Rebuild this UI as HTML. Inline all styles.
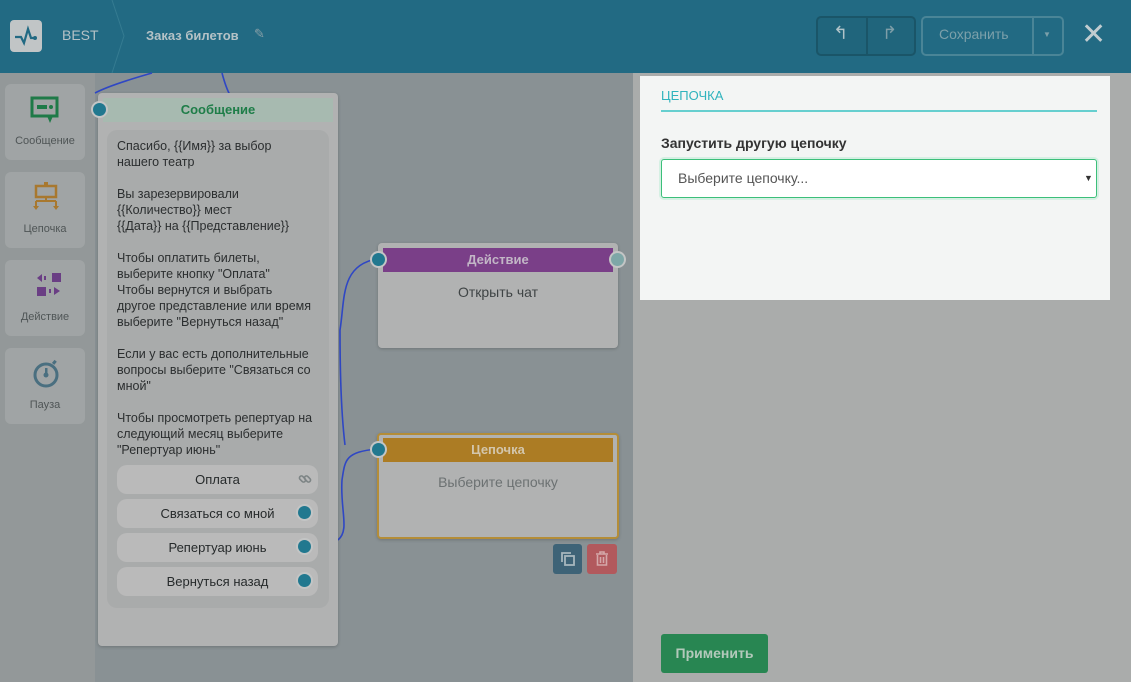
<!DOCTYPE html>
<html><head><meta charset="utf-8"><style>
*{box-sizing:border-box;margin:0;padding:0}
body{width:1131px;height:682px;overflow:hidden;position:relative;background:#899194;font-family:"Liberation Sans","DejaVu Sans",sans-serif;}
.abs{position:absolute}
#hdr{left:0;top:0;width:1131px;height:73px;background:#226a83}
.side{left:0;top:73px;width:95px;height:609px;background:#939899}
.tool{left:5px;width:80px;height:76px;background:#a0a4a5;border-radius:6px;text-align:center;font-size:11px;color:#4f5556}
.tool span{position:absolute;left:0;right:0;bottom:13px}
.card{background:#b1b2b2;border-radius:4px;box-shadow:0 1px 3px rgba(0,0,0,.2)}
.msgtxt{font-size:12.5px;line-height:16px;color:#2b2e2f}
.btn{left:117px;width:201px;height:29px;background:#bababa;border-radius:10px;font-size:13px;color:#262a2b;text-align:center;line-height:29px}
.dot{width:13px;height:13px;border-radius:50%;background:#21788f;box-shadow:0 0 0 2px #c3c5c5}
</style></head><body>
<div id="hdr" class="abs">
  <div class="abs" style="left:10px;top:20px;width:32px;height:32px;background:#c1c5c6;border-radius:4px"></div>
  <svg class="abs" style="left:10px;top:20px" width="32" height="32"><polyline points="5,17 11,17 14,23 18,9 21,18 25,18" fill="none" stroke="#226a83" stroke-width="2.2"/><circle cx="25" cy="18" r="2" fill="#226a83"/></svg>
  <div class="abs" style="left:62px;top:27px;color:#b5c2c6;font-size:14px">BEST</div>
  <svg class="abs" style="left:110px;top:0" width="16" height="73"><polyline points="2,0 14,36 2,73" fill="none" stroke="#357b91" stroke-width="1"/></svg>
  <div class="abs" style="left:146px;top:28px;color:#b5c2c6;font-size:13px;font-weight:bold">Заказ билетов</div>
  <div class="abs" style="left:254px;top:26px;color:#8aa1a8;font-size:13px">✎</div>
  <div class="abs" style="left:816px;top:16px;width:100px;height:40px;border:2px solid #1a5568;border-radius:5px;background:#20657c"></div>
  <div class="abs" style="left:866px;top:16px;width:2px;height:40px;background:#1a5568"></div>
  <div class="abs" style="left:833px;top:23px;color:#b0c3c8;font-size:18px">↰</div>
  <div class="abs" style="left:882px;top:23px;color:#7e9ea8;font-size:18px">↱</div>
  <div class="abs" style="left:921px;top:16px;width:143px;height:40px;border:2px solid #4a8597;border-radius:5px"></div>
  <div class="abs" style="left:1032px;top:16px;width:2px;height:40px;background:#4a8597"></div>
  <div class="abs" style="left:939px;top:26px;color:#7ca0aa;font-size:14px">Сохранить</div>
  <div class="abs" style="left:1043px;top:30px;color:#7ca0aa;font-size:8px">▼</div>
  <div class="abs" style="left:1081px;top:18px;color:#c0ccd0;font-size:30px;line-height:34px">✕</div>
</div>

<div class="abs side"></div>
<div class="abs tool" style="top:84px"><svg class="abs" style="left:25px;top:12px" width="30" height="30"><rect x="2" y="2" width="25" height="18" fill="none" stroke="#1f7a48" stroke-width="3"/><rect x="7" y="9" width="10" height="4" fill="#1f7a48"/><circle cx="21" cy="11" r="2" fill="#1f7a48"/><path d="M17 20 L20 27 L23 20" fill="#1f7a48"/></svg><span>Сообщение</span></div>
<div class="abs tool" style="top:172px"><svg class="abs" style="left:28px;top:10px" width="26" height="32"><rect x="11" y="0" width="4" height="4" fill="#a8782f"/><rect x="3" y="4" width="20" height="11" fill="none" stroke="#a8782f" stroke-width="2.5"/><path d="M13 15 V19 M3 19 H23 M3 19 V25 M23 19 V25" stroke="#a8782f" stroke-width="2" fill="none"/><path d="M0 24 L6 24 L3 28Z M20 24 L26 24 L23 28Z" fill="#a8782f"/></svg><span>Цепочка</span></div>
<div class="abs tool" style="top:260px"><svg class="abs" style="left:30px;top:12px" width="28" height="28"><path d="M2 6 L7 2 L7 10Z" fill="#6a3e84"/><rect x="9" y="4" width="2" height="4" fill="#6a3e84"/><rect x="17" y="1" width="9" height="9" fill="#6a3e84"/><rect x="2" y="15" width="9" height="9" fill="#6a3e84"/><rect x="14" y="17" width="2" height="4" fill="#6a3e84"/><path d="M19 15 L25 19 L19 23Z" fill="#6a3e84"/></svg><span>Действие</span></div>
<div class="abs tool" style="top:348px"><svg class="abs" style="left:26px;top:10px" width="30" height="32"><circle cx="15" cy="17" r="11" fill="none" stroke="#4a6f80" stroke-width="3"/><rect x="14" y="10" width="2.5" height="8" fill="#4a6f80"/><circle cx="15" cy="17" r="2.5" fill="#4a6f80"/><rect x="22" y="2" width="3" height="4" fill="#4a6f80" transform="rotate(40 23 4)"/></svg><span>Пауза</span></div>

<svg class="abs" style="left:0;top:0" width="640" height="682"><g fill="none" stroke="#2f47c4" stroke-width="1.6"><path d="M95 93 Q110 85 152 73"/><path d="M222 73 Q226 88 230 95"/><path d="M377 259 C340 265 345 300 340 330 C340 380 342 420 345 445"/><path d="M377 449 C345 452 345 460 342 480 C340 510 350 530 338 540"/></g></svg>

<div class="abs card" style="left:98px;top:93px;width:240px;height:553px"></div>
<div class="abs" style="left:103px;top:98px;width:230px;height:24px;background:#a7bab0;color:#1e7d48;font-weight:bold;font-size:13px;text-align:center;line-height:24px">Сообщение</div>
<div class="abs dot" style="left:93px;top:103px"></div>
<div class="abs" style="left:107px;top:130px;width:222px;height:478px;background:#a9abab;border-radius:10px"></div>
<div class="abs msgtxt" style="left:117px;top:138px;width:210px">Спасибо, {{Имя}} за выбор<br>нашего театр<br><br>Вы зарезервировали<br>{{Количество}} мест<br>{{Дата}} на {{Представление}}<br><br>Чтобы оплатить билеты,<br>выберите кнопку "Оплата"<br>Чтобы вернутся и выбрать<br>другое представление или время<br>выберите "Вернуться назад"<br><br>Если у вас есть дополнительные<br>вопросы выберите "Связаться со<br>мной"<br><br>Чтобы просмотреть репертуар на<br>следующий месяц выберите<br>"Репертуар июнь"</div>
<div class="abs btn" style="top:465px">Оплата<svg style="position:absolute;right:6px;top:7px" width="14" height="14"><g fill="none" stroke="#7d8485" stroke-width="1.6"><rect x="1" y="5" width="7" height="4" rx="2" transform="rotate(45 4.5 7)"/><rect x="6" y="5" width="7" height="4" rx="2" transform="rotate(45 9.5 7)"/></g></svg></div>
<div class="abs btn" style="top:499px">Связаться со мной</div>
<div class="abs btn" style="top:533px">Репертуар июнь</div>
<div class="abs btn" style="top:567px">Вернуться назад</div>
<div class="abs dot" style="left:298px;top:506px"></div>
<div class="abs dot" style="left:298px;top:540px"></div>
<div class="abs dot" style="left:298px;top:574px"></div>

<div class="abs card" style="left:378px;top:243px;width:240px;height:105px"></div>
<div class="abs" style="left:383px;top:248px;width:230px;height:24px;background:#7a3f88;color:#c2b6c6;font-weight:bold;font-size:13px;text-align:center;line-height:24px">Действие</div>
<div class="abs dot" style="left:372px;top:253px"></div>
<div class="abs dot" style="left:611px;top:253px;background:#7ea7a7"></div>
<div class="abs" style="left:378px;top:284px;width:240px;text-align:center;font-size:14px;color:#3f4445">Открыть чат</div>

<div class="abs card" style="left:377px;top:433px;width:242px;height:106px;border:2px solid #b48d38"></div>
<div class="abs" style="left:383px;top:438px;width:230px;height:24px;background:#ac7c24;color:#d3c6ac;font-weight:bold;font-size:13px;text-align:center;line-height:24px">Цепочка</div>
<div class="abs dot" style="left:372px;top:443px"></div>
<div class="abs" style="left:377px;top:474px;width:242px;text-align:center;font-size:14px;color:#6c7172">Выберите цепочку</div>
<div class="abs" style="left:553px;top:544px;width:29px;height:30px;background:#3e6377;border-radius:3px"><svg class="abs" style="left:7px;top:7px" width="16" height="16"><g fill="none" stroke="#a7b6bd" stroke-width="1.8"><path d="M2 11 V2 H11"/><rect x="5" y="5" width="9" height="9"/></g></svg></div>
<div class="abs" style="left:587px;top:544px;width:30px;height:30px;background:#b2595d;border-radius:3px"><svg class="abs" style="left:8px;top:7px" width="14" height="16"><g fill="none" stroke="#d4a8a9" stroke-width="1.6"><path d="M1 3 H13 M5 3 V1 H9 V3"/><path d="M2.5 4 V14 H11.5 V4"/><path d="M5.5 6 V12 M8.5 6 V12"/></g></svg></div>

<div class="abs" style="left:633px;top:73px;width:498px;height:609px;background:#aaacab"></div>
<div class="abs" style="left:640px;top:76px;width:470px;height:224px;background:#f3f5f4"></div>
<div class="abs" style="left:661px;top:88px;color:#2fb3bd;font-size:13px">ЦЕПОЧКА</div>
<div class="abs" style="left:661px;top:110px;width:436px;height:2px;background:#66cfcf"></div>
<div class="abs" style="left:661px;top:135px;color:#333;font-size:14px;font-weight:bold">Запустить другую цепочку</div>
<div class="abs" style="left:661px;top:159px;width:436px;height:39px;background:#fff;border:1px solid #3cbf7a;border-radius:3px;box-shadow:0 0 0 2px #d5f0e3"></div>
<div class="abs" style="left:678px;top:170px;color:#555;font-size:14px">Выберите цепочку...</div>
<div class="abs" style="left:1084px;top:173px;color:#333;font-size:9px">▼</div>
<div class="abs" style="left:661px;top:634px;width:107px;height:39px;background:#288652;border-radius:3px;color:#b3c9bb;font-size:14px;font-weight:bold;text-align:center;line-height:39px">Применить</div>
</body></html>
